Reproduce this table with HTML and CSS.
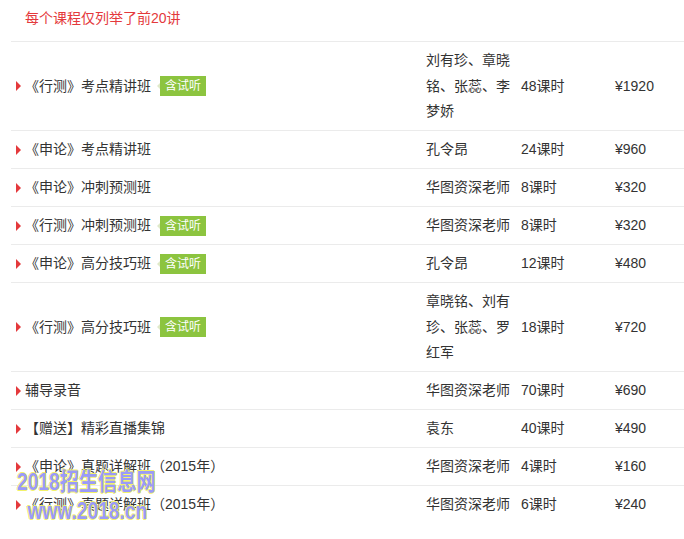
FILE: index.html
```html
<!DOCTYPE html>
<html lang="zh-CN">
<head>
<meta charset="utf-8">
<title>课程列表</title>
<link rel="stylesheet" href="styles.css">
</head>
<body>
<div class="page">
  <div class="note">每个课程仅列举了前20讲</div>
  <div class="list">
    <div class="row">
      <div class="name"><i class="tri"></i><span>《行测》考点精讲班</span><em class="badge">含试听</em></div>
      <div class="teacher">刘有珍、章晓铭、张蕊、李梦娇</div>
      <div class="hours">48课时</div>
      <div class="price">¥1920</div>
    </div>
    <div class="row">
      <div class="name"><i class="tri"></i><span>《申论》考点精讲班</span></div>
      <div class="teacher">孔令昂</div>
      <div class="hours">24课时</div>
      <div class="price">¥960</div>
    </div>
    <div class="row">
      <div class="name"><i class="tri"></i><span>《申论》冲刺预测班</span></div>
      <div class="teacher">华图资深老师</div>
      <div class="hours">8课时</div>
      <div class="price">¥320</div>
    </div>
    <div class="row">
      <div class="name"><i class="tri"></i><span>《行测》冲刺预测班</span><em class="badge">含试听</em></div>
      <div class="teacher">华图资深老师</div>
      <div class="hours">8课时</div>
      <div class="price">¥320</div>
    </div>
    <div class="row">
      <div class="name"><i class="tri"></i><span>《申论》高分技巧班</span><em class="badge">含试听</em></div>
      <div class="teacher">孔令昂</div>
      <div class="hours">12课时</div>
      <div class="price">¥480</div>
    </div>
    <div class="row">
      <div class="name"><i class="tri"></i><span>《行测》高分技巧班</span><em class="badge">含试听</em></div>
      <div class="teacher">章晓铭、刘有珍、张蕊、罗红军</div>
      <div class="hours">18课时</div>
      <div class="price">¥720</div>
    </div>
    <div class="row">
      <div class="name"><i class="tri"></i><span>辅导录音</span></div>
      <div class="teacher">华图资深老师</div>
      <div class="hours">70课时</div>
      <div class="price">¥690</div>
    </div>
    <div class="row">
      <div class="name"><i class="tri"></i><span>【赠送】精彩直播集锦</span></div>
      <div class="teacher">袁东</div>
      <div class="hours">40课时</div>
      <div class="price">¥490</div>
    </div>
    <div class="row">
      <div class="name"><i class="tri"></i><span>《申论》真题详解班（2015年）</span></div>
      <div class="teacher">华图资深老师</div>
      <div class="hours">4课时</div>
      <div class="price">¥160</div>
    </div>
    <div class="row">
      <div class="name"><i class="tri"></i><span>《行测》真题详解班（2015年）</span></div>
      <div class="teacher">华图资深老师</div>
      <div class="hours">6课时</div>
      <div class="price">¥240</div>
    </div>
  </div>
  <div class="watermark">
    <div class="wm1"><span class="wm-num">2018</span><span class="wm-cjk">招生信息网</span></div>
    <div class="wm2">www.2018.cn</div>
  </div>
</div>
</body>
</html>
```
FILE: styles.css
```css
html, body {
  margin: 0;
  padding: 0;
  background: #fff;
}
body {
  font-family: "Liberation Sans", "Noto Sans CJK SC", sans-serif;
  font-size: 14px;
  color: #333;
}
.page {
  position: relative;
  width: 684px;
  height: 539px;
  overflow: hidden;
  padding-left: 11px;
  box-sizing: border-box;
}
.note {
  color: #e4393c;
  line-height: 25px;
  padding: 6px 0 10px 14px;
}
.list {
  width: 673px;
}
.row {
  display: grid;
  grid-template-columns: 415px 95px 94px 69px;
  align-items: center;
  border-top: 1px solid #ebebeb;
  padding: 6px 0 5.5px;
  line-height: 25.5px;
}
.name {
  display: flex;
  align-items: center;
  padding-left: 5px;
}
.tri {
  width: 0;
  height: 0;
  border-top: 5px solid transparent;
  border-bottom: 5px solid transparent;
  border-left: 5px solid #e4393c;
  margin-right: 4px;
}
.badge {
  position: relative;
  font-style: normal;
  background: #8cc43f;
  color: #fff;
  font-size: 12px;
  line-height: 20px;
  height: 20px;
  padding: 0 5px;
  margin-left: 9px;
}
.badge::before {
  content: "";
  position: absolute;
  left: -3px;
  top: 7px;
  border-top: 3px solid transparent;
  border-bottom: 3px solid transparent;
  border-right: 3px solid #dfe9c8;
}
.teacher {
  padding-right: 7px;
}
.watermark {
  position: absolute;
  left: 17px;
  top: 468px;
  font-family: "Liberation Sans", "Noto Sans CJK SC", sans-serif;
  font-weight: bold;
  color: #9a9af8;
  transform: scaleX(0.8);
  transform-origin: left top;
  text-shadow: 1px 0 0 #f2f26a, -1px 0 0 #f2f26a, 0 1px 0 #f2f26a, 0 -1px 0 #f2f26a;
  line-height: 28px;
}
.wm-num {
  font-size: 24px;
}
.wm-cjk {
  font-size: 24px;
}
.wm2 {
  font-size: 24px;
  line-height: 24px;
  padding-left: 13px;
}
```
